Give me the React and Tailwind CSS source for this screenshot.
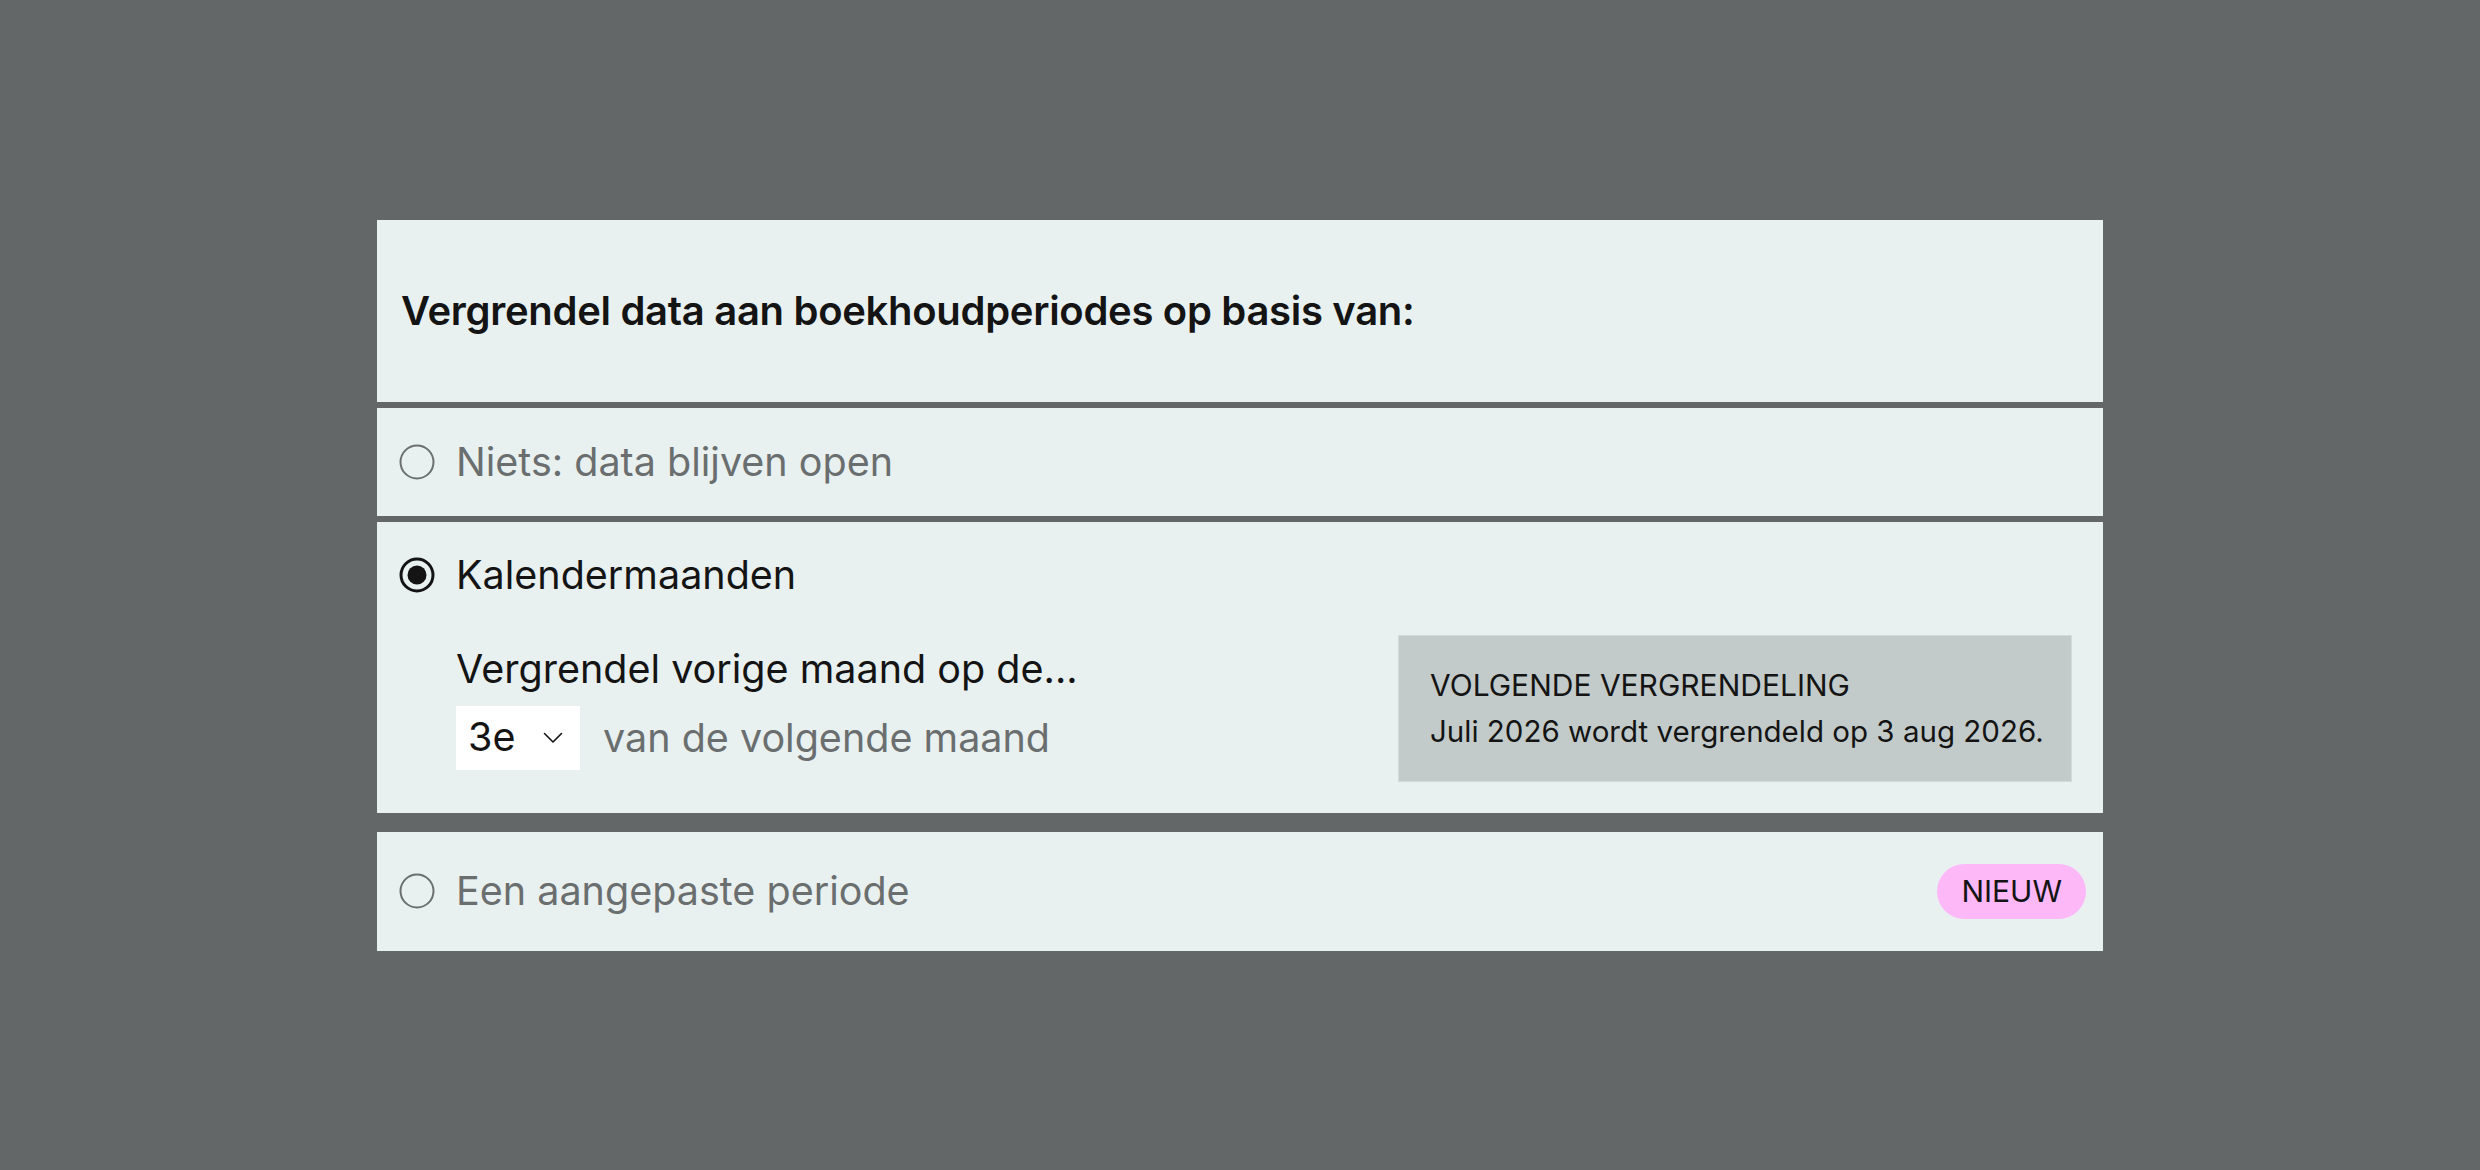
function Radio({ checked }) {
    if (checked) {
        return (
            <svg width="36" height="36" viewBox="0 0 36 36" fill="none" className="shrink-0">
                <circle cx="18" cy="18" r="16" stroke="#141414" strokeWidth="3" />
                <circle cx="18" cy="18" r="9.5" fill="#141414" />
            </svg>
        );
    }
    return (
        <svg width="36" height="36" viewBox="0 0 36 36" fill="none" className="shrink-0">
            <circle cx="18" cy="18" r="16.5" stroke="#6b6f70" strokeWidth="2" />
        </svg>
    );
}

function Chevron() {
    return (
        <svg width="20" height="12" viewBox="0 0 20 12" fill="none">
            <path d="M1.5 1.5L10 10L18.5 1.5" stroke="#141414" strokeWidth="1.6" strokeLinecap="round" strokeLinejoin="round" />
        </svg>
    );
}

export default function App() {
    return (
        <div className="w-full h-screen flex items-center justify-center bg-[#636768] font-['Inter',sans-serif]">
            <div className="w-[1726px] flex flex-col">
                {/* Header */}
                <div className="h-[182px] bg-[#e9f1f0] flex items-center pl-[24px]">
                    <h2 className="text-[40px] font-semibold text-[#141414] tracking-[-0.3px]">
                        Vergrendel data aan boekhoudperiodes op basis van:
                    </h2>
                </div>

                {/* Niets */}
                <div className="mt-[6px] h-[108px] bg-[#e9f1f0] flex items-center gap-[21px] px-[22px]">
                    <Radio />
                    <span className="text-[39.5px] leading-[60px] text-[#6a6e6f]">Niets: data blijven open</span>
                </div>

                {/* Kalendermaanden */}
                <div className="mt-[6px] bg-[#e9f1f0] pt-[23px] pb-[31px]">
                    <div className="flex items-center gap-[21px] px-[22px] h-[60px]">
                        <Radio checked />
                        <span className="text-[39.5px] leading-[60px] text-[#141414]">Kalendermaanden</span>
                    </div>
                    <div className="mt-[30px] flex items-start justify-between pl-[79px] pr-[31px]">
                        <div className="pt-[4px] flex flex-col">
                            <span className="text-[39.5px] leading-[60px] text-[#141414]">Vergrendel vorige maand op de...</span>
                            <div className="mt-[7px] flex items-center gap-[23px]">
                                <div className="w-[124px] h-[64px] bg-white flex items-center justify-between pl-[12px] pr-[17px]">
                                    <span className="text-[39.5px] leading-none text-[#141414]">3e</span>
                                    <Chevron />
                                </div>
                                <span className="text-[39.5px] leading-[60px] text-[#6a6e6f]">van de volgende maand</span>
                            </div>
                        </div>
                        <div className="w-[674px] h-[147px] bg-[#c3cbca] border border-[#d3dbda] flex flex-col justify-center px-[31px] whitespace-nowrap">
                            <span className="text-[30px] leading-[46px] text-[#141414]">VOLGENDE VERGRENDELING</span>
                            <span className="text-[29.5px] leading-[46px] text-[#141414]">Juli 2026 wordt vergrendeld op 3 aug 2026.</span>
                        </div>
                    </div>
                </div>

                {/* Aangepaste periode */}
                <div className="mt-[19px] h-[119px] bg-[#e9f1f0] flex items-center gap-[21px] pl-[22px] pr-[17px]">
                    <Radio />
                    <span className="text-[39.5px] leading-[60px] text-[#6a6e6f]">Een aangepaste periode</span>
                    <span className="ml-auto h-[55px] px-[24px] rounded-full bg-[#fdb8f8] flex items-center text-[30px] text-[#141414]">
                        NIEUW
                    </span>
                </div>
            </div>
        </div>
    );
}
